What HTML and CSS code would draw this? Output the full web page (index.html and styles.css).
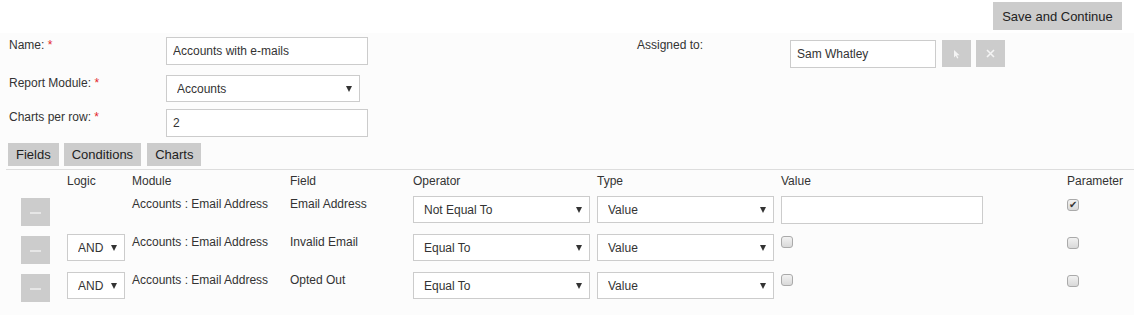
FILE: index.html
```html
<!DOCTYPE html>
<html lang="en">

<head>
  <meta charset="UTF-8">
  <meta name="viewport" content="width=device-width, initial-scale=1.0">
  <title>Report</title>
  <link rel="stylesheet" href="styles.css">
</head>

<body>

  <div class="topbar">
    <button class="btn save">Save and Continue</button>
  </div>

  <div class="panel">
    <!-- report details -->
    <div class="details">
      <label class="lbl">Name: <span class="req">*</span></label>
      <div><input class="txt w202" type="text" value="Accounts with e-mails"></div>
      <label class="lbl">Assigned to:</label>
      <div class="assigned">
        <input class="txt w146" type="text" value="Sam Whatley">
        <button class="ibtn">
          <svg width="8" height="10" viewBox="0 0 8 10"><path d="M1 1 L1 8.5 L2.8 6.8 L4.2 9.6 L5.4 9 L4 6.3 L6.6 6.3 Z" fill="#f4f4f4"/></svg>
        </button>
        <button class="ibtn">
          <svg width="9" height="9" viewBox="0 0 9 9"><path d="M1 1 L8 8 M8 1 L1 8" stroke="#f4f4f4" stroke-width="1.6"/></svg>
        </button>
      </div>

      <label class="lbl">Report Module: <span class="req">*</span></label>
      <div><span class="sel"><select class="w194">
            <option>Accounts</option>
          </select></span></div>
      <div></div>
      <div></div>

      <label class="lbl">Charts per row: <span class="req">*</span></label>
      <div><input class="txt w202" type="text" value="2"></div>
      <div></div>
      <div></div>
    </div>

    <div class="tabs">
      <button class="btn tab">Fields</button>
      <button class="btn tab">Conditions</button>
      <button class="btn tab">Charts</button>
    </div>

    <!-- conditions -->
    <div class="conditions">
      <div class="grid">
        <div class="hd"></div>
        <div class="hd">Logic</div>
        <div class="hd">Module</div>
        <div class="hd">Field</div>
        <div class="hd">Operator</div>
        <div class="hd">Type</div>
        <div class="hd">Value</div>
        <div class="hd">Parameter</div>

        <div class="cell"><button class="rm"><i></i></button></div>
        <div class="cell"></div>
        <div class="cell">Accounts : Email Address</div>
        <div class="cell">Email Address</div>
        <div class="cell"><span class="sel"><select class="w177"><option>Not Equal To</option></select></span></div>
        <div class="cell"><span class="sel"><select class="w177"><option>Value</option></select></span></div>
        <div class="cell"><input class="txt w202" type="text"></div>
        <div class="cell"><input class="chk pchk" type="checkbox" checked></div>

        <div class="cell"><button class="rm"><i></i></button></div>
        <div class="cell"><span class="sel"><select class="w58"><option>AND</option></select></span></div>
        <div class="cell">Accounts : Email Address</div>
        <div class="cell">Invalid Email</div>
        <div class="cell"><span class="sel"><select class="w177"><option>Equal To</option></select></span></div>
        <div class="cell"><span class="sel"><select class="w177"><option>Value</option></select></span></div>
        <div class="cell"><input class="chk" type="checkbox"></div>
        <div class="cell"><input class="chk pchk" type="checkbox"></div>

        <div class="cell"><button class="rm"><i></i></button></div>
        <div class="cell"><span class="sel"><select class="w58"><option>AND</option></select></span></div>
        <div class="cell">Accounts : Email Address</div>
        <div class="cell">Opted Out</div>
        <div class="cell"><span class="sel"><select class="w177"><option>Equal To</option></select></span></div>
        <div class="cell"><span class="sel"><select class="w177"><option>Value</option></select></span></div>
        <div class="cell"><input class="chk" type="checkbox"></div>
        <div class="cell"><input class="chk pchk" type="checkbox"></div>
      </div>
    </div>
  </div>

</body>

</html>
```

FILE: styles.css
```css
* {
  margin: 0;
  padding: 0;
  box-sizing: border-box;
}

body {
  font-family: "Liberation Sans", Arial, sans-serif;
  font-size: 12px;
  color: #333;
  background: #fff;
}

button,
input,
select {
  font-family: inherit;
  color: #333;
}

.btn {
  border: none;
  background: #ccc;
  font-size: 13px;
  color: #222;
}

.topbar {
  height: 33px;
  display: flex;
  justify-content: flex-end;
  padding: 2px 12px 0 0;
}

.save {
  width: 129px;
  height: 28px;
}

.panel {
  background: #fcfcfc;
  height: 282px;
}

.details {
  display: grid;
  grid-template-columns: 157px 471px 153px auto;
  grid-template-rows: 38px 34px 28px;
  padding: 4px 0 0 9px;
}

.lbl {
  line-height: 16px;
}

.req {
  color: #e3262b;
}

.txt {
  border: 1px solid #ccc;
  background: #fff;
  font-size: 12px;
  height: 28px;
  padding: 0 6px;
  outline: none;
}

.w202 {
  width: 202px;
}

.w146 {
  width: 146px;
}

.w194 {
  width: 194px;
}

.w177 {
  width: 177px;
}

.w58 {
  width: 58px;
}

.assigned {
  display: flex;
  margin-top: 3px;
}

.ibtn {
  width: 29px;
  height: 27px;
  border: none;
  background: #ccc;
  margin-left: 5px;
  display: flex;
  align-items: center;
  justify-content: center;
}

.ibtn:first-of-type {
  margin-left: 6px;
}

.ibtn svg {
  display: block;
}

.sel {
  position: relative;
  display: inline-block;
}

.sel select {
  appearance: none;
  -webkit-appearance: none;
  height: 27px;
  border: 1px solid #ccc;
  border-radius: 0;
  background: #fff;
  font-size: 12px;
  padding: 0 20px 0 10px;
  outline: none;
}

.sel::after {
  content: "";
  position: absolute;
  right: 8px;
  top: 11px;
  border-left: 3px solid transparent;
  border-right: 3px solid transparent;
  border-top: 6px solid #333;
  pointer-events: none;
}

.tabs {
  display: flex;
  gap: 5px;
  padding-left: 8px;
  margin-top: 6px;
}

.tab {
  height: 23px;
  padding: 0 8px;
}

.tabs .tab:last-child {
  margin-left: 1px;
}

.conditions {
  margin: 3px 0 0 6px;
  border-top: 1px solid #ddd;
}

.grid {
  display: grid;
  grid-template-columns: 61px 65px 158px 123px 184px 184px 286px auto;
  grid-template-rows: 23px 38px 38px 38px;
  padding-top: 3px;
}

.hd,
.cell {
  line-height: 16px;
}

.rm {
  width: 29px;
  height: 28px;
  border: none;
  background: #ccc;
  margin: 2px 0 0 15px;
  display: flex;
  align-items: center;
  justify-content: center;
}

.rm i {
  display: block;
  width: 11px;
  height: 2px;
  background: #e6e6e6;
  margin-top: 2px;
}

.chk {
  appearance: none;
  -webkit-appearance: none;
  width: 12px;
  height: 12px;
  border: 1px solid #aaa;
  border-radius: 3px;
  background: linear-gradient(#f2f2f2, #d9d9d9);
  margin-top: 2px;
  position: relative;
  display: block;
}

.pchk {
  margin-top: 3px;
}

.chk:checked::after {
  content: "\2714";
  position: absolute;
  left: 1px;
  top: -2px;
  font-size: 10px;
  line-height: 14px;
  color: #333;
}
```
